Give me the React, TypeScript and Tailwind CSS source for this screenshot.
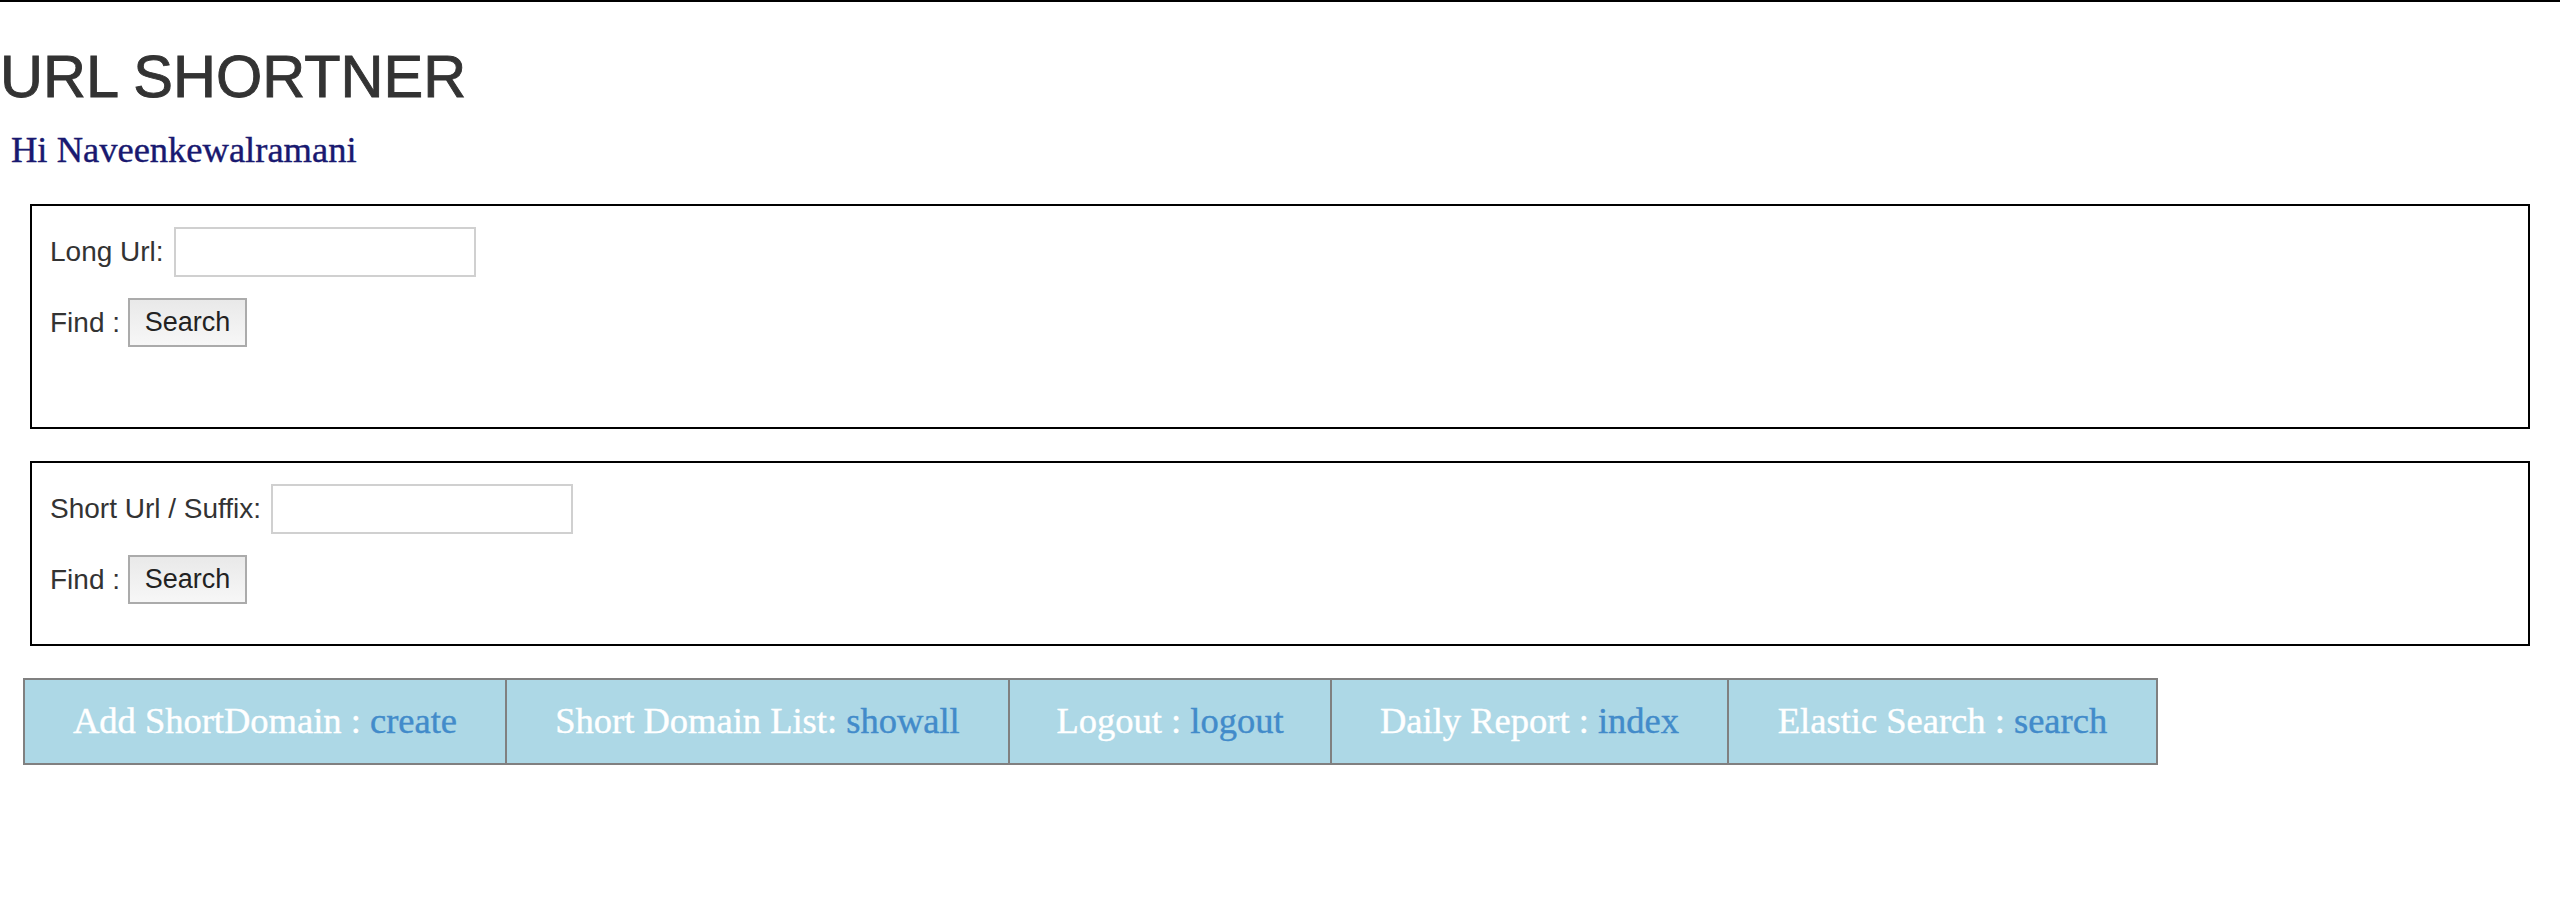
import React from "react";

const NAV = [
  { label: "Add ShortDomain : ", link: "create", w: "w-[482px]" },
  { label: "Short Domain List: ", link: "showall", w: "w-[503px]" },
  { label: "Logout : ", link: "logout", w: "w-[322px]" },
  { label: "Daily Report : ", link: "index", w: "w-[397px]" },
  { label: "Elastic Search : ", link: "search", w: "w-[427px]" },
];

function SearchBox({ label, extra }: { label: string; extra?: boolean }) {
  return (
    <div className="mx-[30px] border-2 border-black pl-[18px] pt-[21px] pb-[40px] font-['Liberation_Sans',Arial,sans-serif] text-[28px] text-[#333]">
      <div className="flex h-[50px] items-center gap-[10px]">
        <span>{label}</span>
        <input
          type="text"
          className="h-[50px] w-[302px] border-2 border-[#d0d0d0] bg-white outline-none"
        />
      </div>
      <div className="mt-[21px] flex h-[49px] items-center gap-[8px]">
        <span>Find :</span>
        <button className="h-[49px] w-[119px] border-2 border-[#ababab] bg-gradient-to-b from-[#e9e9e9] to-[#f7f7f7] text-[27px] text-[#222]">
          Search
        </button>
      </div>
      {extra && <div className="h-[40px]" />}
    </div>
  );
}

export default function App() {
  return (
    <div className="min-h-screen border-t-2 border-black bg-white">
      <h1 className="mt-[43px] h-[64px] font-['Liberation_Sans',Arial,sans-serif] text-[59.5px] leading-[64px] text-[#333] [-webkit-text-stroke:0.9px_#333]">
        URL SHORTNER
      </h1>
      <div className="mt-[21px] h-[40px] pl-[11px] font-['Liberation_Serif',Georgia,serif] text-[36.5px] leading-[40px] text-[#191970] [-webkit-text-stroke:0.4px_currentColor]">
        Hi Naveenkewalramani
      </div>

      <div className="mt-[34px] flex flex-col gap-[32px]">
        <SearchBox label="Long Url:" extra />
        <SearchBox label="Short Url / Suffix:" />
      </div>

      {/* links row */}
      <div className="mt-[32px] ml-[23px] flex h-[87px] w-fit border-2 border-[#808080] bg-[#add8e6] font-['Liberation_Serif',Georgia,serif] text-[36.5px] [-webkit-text-stroke:0.4px_currentColor]">
        {NAV.map((n, i) => (
          <div
            key={n.link}
            className={`${n.w} flex items-center justify-center ${i < NAV.length - 1 ? "border-r-2 border-[#808080]" : ""}`}
          >
            <span className="text-white">{n.label}</span>
            <a href="#" className="ml-[0.25em] text-[#428bca]">
              {n.link}
            </a>
          </div>
        ))}
      </div>
    </div>
  );
}
